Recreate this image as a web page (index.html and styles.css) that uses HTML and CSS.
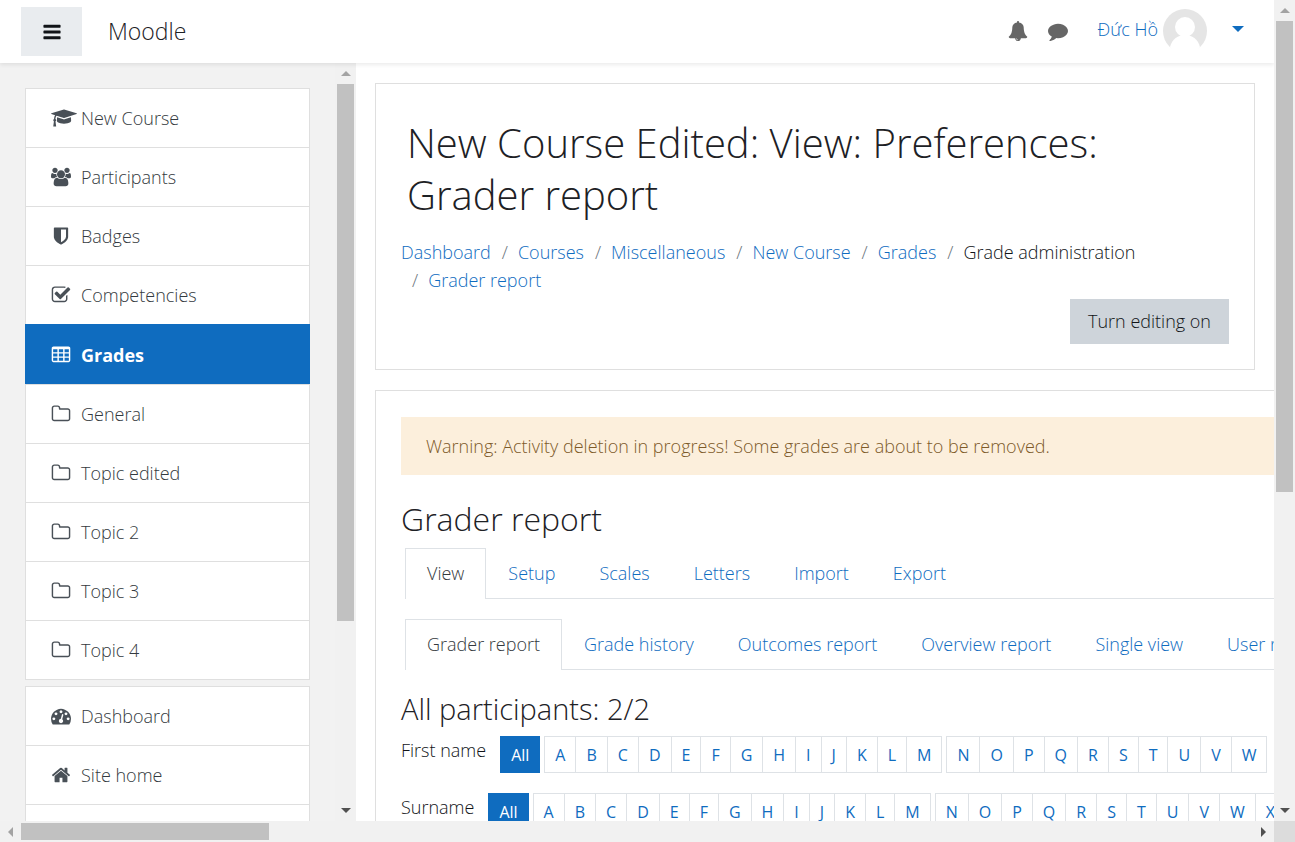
FILE: index.html
```html
<!DOCTYPE html>
<html lang="en">
<head>
<meta charset="utf-8">
<meta name="viewport" content="width=device-width, initial-scale=1">
<title>New Course Edited: View: Preferences: Grader report</title>
<link rel="stylesheet" href="styles.css">
</head>
<body>
<svg class="sprite" aria-hidden="true">
  <symbol id="i-folder" viewBox="0 0 1792 1792"><path d="M1600 1312v-704q0-40-28-68t-68-28h-704q-40 0-68-28t-28-68v-64q0-40-28-68t-68-28h-320q-40 0-68 28t-28 68v960q0 40 28 68t68 28h1216q40 0 68-28t28-68zm128-704v704q0 92-66 158t-158 66h-1216q-92 0-158-66t-66-158v-960q0-92 66-158t158-66h320q92 0 158 66t66 158v32h672q92 0 158 66t66 158z"/></symbol>
</svg>
<div class="window">
  <div class="page">
    <header class="navbar">
      <button class="drawer-toggle" type="button" aria-label="Side panel">
        <svg class="icon" viewBox="0 0 1536 1792"><path d="M1536 1344v128q0 26-19 45t-45 19h-1408q-26 0-45-19t-19-45v-128q0-26 19-45t45-19h1408q26 0 45 19t19 45zm0-512v128q0 26-19 45t-45 19h-1408q-26 0-45-19t-19-45v-128q0-26 19-45t45-19h1408q26 0 45 19t19 45zm0-512v128q0 26-19 45t-45 19h-1408q-26 0-45-19t-19-45v-128q0-26 19-45t45-19h1408q26 0 45 19t19 45z"/></svg>
      </button>
      <a class="brand" href="#">Moodle</a>
      <button class="nav-icon" type="button" aria-label="Notifications">
        <svg class="icon" viewBox="0 0 1792 1792"><path d="M912 1696q0-16-16-16-59 0-101.5-42.5t-42.5-101.5q0-16-16-16t-16 16q0 73 51.5 124.5t124.5 51.5q16 0 16-16zm816-288q0 52-38 90t-90 38h-448q0 106-75 181t-181 75-181-75-75-181h-448q-52 0-90-38t-38-90q50-42 91-88t85-119.5 74.5-158.5 50-206 19.5-260q0-152 117-282.5t307-158.5q-8-19-8-39 0-40 28-68t68-28 68 28 28 68q0 20-8 39 190 28 307 158.5t117 282.5q0 139 19.5 260t50 206 74.5 158.5 85 119.5 91 88z"/></svg>
      </button>
      <button class="nav-icon" type="button" aria-label="Messages">
        <svg class="icon" viewBox="0 0 1792 1792"><path d="M1792 896q0 174-120 321.5t-326 233-450 85.5q-70 0-145-8-198 175-460 242-49 14-114 22-17 2-30.5-9t-17.5-29v-1q-3-4-.5-12t2-10 4.5-9.5l6-9 7-8.5 8-9q7-8 31-34.5t34.5-38 31-39.5 32.5-51 27-59 26-76q-157-89-247.5-220t-90.5-281q0-130 71-248.5t191-204.5 286-136.5 348-50.5q244 0 450 85.5t326 233 120 321.5z"/></svg>
      </button>
      <a class="user" href="#">
        <span class="user-name">Đức Hồ</span>
        <svg class="avatar" viewBox="0 0 44 44"><circle cx="22" cy="22" r="22" fill="#e5e5e5"/><circle cx="22" cy="18" r="10" fill="#fff"/><path d="M7 38C9 30 15 26 22 26s13 4 15 12c-1 3-9 7-15 7s-14-4-15-7z" fill="#fff"/></svg>
        <span class="caret"></span>
      </a>
    </header>
    <div class="body">
      <aside class="drawer">
        <div class="drawer-content">
          <nav class="list" aria-label="Course">
            <a class="item" href="#"><span class="glyph glyph-wide"><svg class="icon" viewBox="0 0 2304 1792"><path d="M1774 836l18 316q4 69-82 128t-235 93.500-323 34.500-323-34.500-235-93.500-82-128l18-316 574 181q22 7 48 7t48-7zm530-324q0 23-22 31l-1120 352q-4 1-10 1t-10-1l-652-206q-43 34-71 111.500t-34 178.500q63 36 63 109 0 69-58 107l58 433q2 14-8 25-9 11-24 11h-192q-15 0-24-11-10-11-8-25l58-433q-58-38-58-107 0-73 65-111 11-207 98-330l-333-104q-22-8-22-31t22-31l1120-352q4-1 10-1t10 1l1120 352q22 8 22 31z"/></svg></span>New Course</a>
            <a class="item" href="#"><span class="glyph"><svg class="icon" viewBox="0 0 1920 1792"><path d="M593 896q-162 5-265 128h-134q-82 0-138-40.500t-56-118.500q0-353 124-353 6 0 43.500 21t97.500 42.500 119 21.500q67 0 133-23-5 37-5 66 0 139 81 256zm1071 637q0 120-73 189.500t-194 69.500h-874q-121 0-194-69.500t-73-189.500q0-53 3.500-103.500t14-109 26.500-108.500 43-97.500 62-81 85.500-53.500 111.500-20q10 0 43 21.500t73 48 107 48 135 21.500 135-21.500 107-48 73-48 43-21.500q61 0 111.500 20t85.500 53.500 62 81 43 97.500 26.500 108.500 14 109 3.500 103.500zm-1024-1277q0 106-75 181t-181 75-181-75-75-181 75-181 181-75 181 75 75 181zm704 384q0 159-112.500 271.500t-271.500 112.500-271.500-112.500-112.500-271.500 112.500-271.500 271.500-112.500 271.500 112.500 112.500 271.500zm576 225q0 78-56 118.500t-138 40.500h-134q-103-123-265-128 81-117 81-256 0-29-5-66 66 23 133 23 59 0 119-21.500t97.500-42.500 43.500-21q124 0 124 353zm-128-609q0 106-75 181t-181 75-181-75-75-181 75-181 181-75 181 75 75 181z"/></svg></span>Participants</a>
            <a class="item" href="#"><span class="glyph"><svg class="icon" viewBox="0 0 1792 1792"><path d="M1344 960v-640h-448v1137q119-63 213-137 235-184 235-360zm192-768v768q0 86-33.500 170.500t-83 150-118 127.500-126.500 103-121 77.500-89.500 49.500-42.500 20q-12 6-26 6t-26-6q-16-7-42.500-20t-89.500-49.500-121-77.500-126.500-103-118-127.500-83-150-33.500-170.500v-768q0-26 19-45t45-19h1152q26 0 45 19t19 45z"/></svg></span>Badges</a>
            <a class="item" href="#"><span class="glyph"><svg class="icon" viewBox="0 0 1792 1792"><path d="M1472 930v318q0 119-84.500 203.500t-203.500 84.500h-832q-119 0-203.500-84.500t-84.500-203.500v-832q0-119 84.500-203.500t203.500-84.500h832q63 0 117 25 15 7 18 23 3 17-9 29l-49 49q-10 10-23 10-3 0-9-2-23-6-45-6h-832q-66 0-113 47t-47 113v832q0 66 47 113t113 47h832q66 0 113-47t47-113v-254q0-13 9-22l64-64q10-10 23-10 6 0 12 3 20 8 20 29zm231-489l-814 814q-24 24-57 24t-57-24l-430-430q-24-24-24-57t24-57l110-110q24-24 57-24t57 24l263 263 647-647q24-24 57-24t57 24l110 110q24 24 24 57t-24 57z"/></svg></span>Competencies</a>
            <a class="item item-active" href="#" aria-current="page"><span class="glyph"><svg class="icon" viewBox="0 0 1792 1792"><path fill-rule="evenodd" d="M224 128h1344q66 0 113 47t47 113v1088q0 66-47 113t-113 47h-1344q-66 0-113-47t-47-113v-1088q0-66 47-113t113-47zM192 384v256h384v-256zM704 384v256h384v-256zM1216 384v256h384v-256zM192 768v256h384v-256zM704 768v256h384v-256zM1216 768v256h384v-256zM192 1152v256h384v-256zM704 1152v256h384v-256zM1216 1152v256h384v-256z"/></svg></span>Grades</a>
            <a class="item" href="#"><span class="glyph"><svg class="icon"><use href="#i-folder"/></svg></span>General</a>
            <a class="item" href="#"><span class="glyph"><svg class="icon"><use href="#i-folder"/></svg></span>Topic edited</a>
            <a class="item" href="#"><span class="glyph"><svg class="icon"><use href="#i-folder"/></svg></span>Topic 2</a>
            <a class="item" href="#"><span class="glyph"><svg class="icon"><use href="#i-folder"/></svg></span>Topic 3</a>
            <a class="item" href="#"><span class="glyph"><svg class="icon"><use href="#i-folder"/></svg></span>Topic 4</a>
          </nav>
          <nav class="list" aria-label="Site">
            <a class="item" href="#"><span class="glyph"><svg class="icon" viewBox="0 0 1792 1792"><path d="M384 1152q0-53-37.500-90.500t-90.500-37.500-90.500 37.500-37.500 90.500 37.500 90.500 90.500 37.500 90.500-37.500 37.500-90.500zm192-448q0-53-37.500-90.500t-90.500-37.500-90.500 37.500-37.500 90.500 37.500 90.500 90.500 37.500 90.500-37.500 37.500-90.500zm428 481l101-382q6-26-7.500-48.500t-38.500-29.500-48 6.500-30 39.500l-101 382q-60 5-107 43.500t-63 98.500q-20 77 20 146t117 89 146-20 89-117q16-60-6-117t-72-91zm660-33q0-53-37.500-90.500t-90.500-37.500-90.500 37.500-37.500 90.500 37.500 90.500 90.500 37.500 90.500-37.500 37.500-90.500zm-640-640q0-53-37.500-90.500t-90.500-37.500-90.500 37.500-37.500 90.500 37.500 90.500 90.500 37.500 90.500-37.500 37.500-90.500zm448 192q0-53-37.500-90.500t-90.500-37.500-90.500 37.500-37.500 90.500 37.500 90.500 90.500 37.500 90.500-37.500 37.500-90.500zm320 448q0 261-141 483-19 29-54 29h-1402q-35 0-54-29-141-221-141-483 0-182 71-348t191-286 286-191 348-71 348 71 286 191 191 286 71 348z"/></svg></span>Dashboard</a>
            <a class="item" href="#"><span class="glyph"><svg class="icon" viewBox="0 0 1792 1792"><path d="M1472 992v480q0 26-19 45t-45 19h-384v-384h-256v384h-384q-26 0-45-19t-19-45v-480q0-1 .5-3t.5-3l575-474 575 474q1 2 1 6zm223-69l-62 74q-8 9-21 11h-3q-13 0-21-7l-692-577-692 577q-12 8-24 7-13-2-21-11l-62-74q-8-10-7-23.500t11-21.500l719-599q32-26 76-26t76 26l244 204v-195q0-14 9-23t23-9h192q14 0 23 9t9 23v408l219 182q10 8 11 21.500t-7 23.500z"/></svg></span>Site home</a>
            <a class="item" href="#" aria-label="More"></a>
          </nav>
        </div>
        <div class="bar bar-y" aria-hidden="true"><span class="arrow arrow-up"></span><div class="track"><div class="thumb" style="height:75%"></div></div><span class="arrow arrow-down"></span></div>
      </aside>
      <main class="main">
        <section class="card">
          <h1>New Course Edited: View: Preferences: Grader report</h1>
          <ol class="breadcrumb">
            <li><a href="#">Dashboard</a></li>
            <li><a href="#">Courses</a></li>
            <li><a href="#">Miscellaneous</a></li>
            <li><a href="#">New Course</a></li>
            <li><a href="#">Grades</a></li>
            <li>Grade administration</li>
            <li><a href="#">Grader report</a></li>
          </ol>
          <div class="actions"><button class="btn" type="button">Turn editing on</button></div>
        </section>
        <section class="card card-wide">
          <div class="alert" role="alert">Warning: Activity deletion in progress! Some grades are about to be removed.</div>
          <h2>Grader report</h2>
          <nav class="tabs" aria-label="Gradebook">
            <a class="tab tab-active" href="#">View</a><a class="tab" href="#">Setup</a><a class="tab" href="#">Scales</a><a class="tab" href="#">Letters</a><a class="tab" href="#">Import</a><a class="tab" href="#">Export</a>
          </nav>
          <nav class="tabs" aria-label="Reports">
            <a class="tab tab-active" href="#">Grader report</a><a class="tab" href="#">Grade history</a><a class="tab" href="#">Outcomes report</a><a class="tab" href="#">Overview report</a><a class="tab" href="#">Single view</a><a class="tab" href="#">User report</a>
          </nav>
          <h3>All participants: 2/2</h3>
          <div class="initials">
            <span class="initials-label">First name</span>
            <a class="all" href="#">All</a>
            <div class="letters"><a href="#">A</a><a href="#">B</a><a href="#">C</a><a href="#">D</a><a href="#">E</a><a href="#">F</a><a href="#">G</a><a href="#">H</a><a href="#">I</a><a href="#">J</a><a href="#">K</a><a href="#">L</a><a href="#">M</a></div>
            <div class="letters"><a href="#">N</a><a href="#">O</a><a href="#">P</a><a href="#">Q</a><a href="#">R</a><a href="#">S</a><a href="#">T</a><a href="#">U</a><a href="#">V</a><a href="#">W</a></div>
          </div>
          <div class="initials">
            <span class="initials-label">Surname</span>
            <a class="all" href="#">All</a>
            <div class="letters"><a href="#">A</a><a href="#">B</a><a href="#">C</a><a href="#">D</a><a href="#">E</a><a href="#">F</a><a href="#">G</a><a href="#">H</a><a href="#">I</a><a href="#">J</a><a href="#">K</a><a href="#">L</a><a href="#">M</a></div>
            <div class="letters"><a href="#">N</a><a href="#">O</a><a href="#">P</a><a href="#">Q</a><a href="#">R</a><a href="#">S</a><a href="#">T</a><a href="#">U</a><a href="#">V</a><a href="#">W</a><a href="#">X</a></div>
          </div>
        </section>
      </main>
    </div>
  </div>
  <div class="bar bar-y" aria-hidden="true"><span class="arrow arrow-up"></span><div class="track"><div class="thumb" style="height:60.5%"></div></div><span class="arrow arrow-down"></span></div>
  <div class="bar bar-x" aria-hidden="true"><span class="arrow arrow-left"></span><div class="track"><div class="thumb" style="width:20.1%"></div></div><span class="arrow arrow-right"></span></div>
  <div class="corner"></div>
</div>
</body>
</html>
```
FILE: styles.css
```css
* { box-sizing: border-box; }

body {
  margin: 0;
  font-family: "Open Sans", "Noto Sans", sans-serif;
  font-size: 18px;
  line-height: 28px;
  font-weight: 300;
  color: #111418;
  background: #fff;
}

a { color: #0f6cbf; text-decoration: none; }
button { font: inherit; color: inherit; border: 0; cursor: pointer; }

.sprite { display: none; }
.icon { height: 20px; width: 20px; flex: none; fill: currentColor; overflow: visible; }

/* Window frame with its scroll bars */
.window {
  display: grid;
  grid-template-columns: minmax(0, 1fr) 21px;
  grid-template-rows: minmax(0, 1fr) 21px;
  height: 100vh;
}
.page { display: flex; flex-direction: column; min-width: 0; min-height: 0; overflow: hidden; }
.bar { display: flex; background: #f1f1f1; }
.bar-y { flex-direction: column; width: 21px; padding: 0 2px; }
.bar-x { padding: 2px 0; }
.track { flex: 1; }
.thumb { width: 100%; height: 100%; background: #c1c1c1; }
.arrow { display: grid; place-items: center; width: 17px; height: 21px; }
.bar-x .arrow { width: 21px; height: 17px; }
.arrow::before { content: ""; border: 5px solid transparent; }
.arrow-up::before { border-top: 0; border-bottom-color: #a3a3a3; }
.arrow-down::before { border-bottom: 0; border-top-color: #505050; }
.arrow-left::before { border-left: 0; border-right-color: #a3a3a3; }
.arrow-right::before { border-right: 0; border-left-color: #505050; }
.corner { background: #dcdcdc; }

/* Top bar */
.navbar {
  display: flex;
  align-items: center;
  flex: none;
  height: 63px;
  padding: 0 30px 0 21px;
  background: #fff;
  box-shadow: 0 2px 4px rgba(0, 0, 0, .08);
  z-index: 1;
}
.drawer-toggle { display: grid; place-items: center; width: 61px; height: 49px; padding: 0; background: #e9ecef; }
.brand { margin: 0 auto 0 26px; padding-bottom: 2px; font-size: 23px; color: #1d2125; }
.nav-icon { display: grid; place-items: center; width: 40px; height: 40px; padding: 0 0 2px; background: none; color: #666; }
.user { display: flex; align-items: center; gap: 5px; margin-left: 20px; padding-bottom: 2px; }
.user-name { padding-bottom: 3px; }
.avatar { width: 44px; height: 44px; }
.caret { margin: 0 0 4px 20px; border: 6px solid transparent; border-top-color: #0f6cbf; border-bottom: 0; }

.body { display: flex; flex: 1; min-height: 0; }

/* Side drawer */
.drawer { display: flex; flex: none; width: 356px; background: #f2f2f2; }
.drawer-content { flex: 1; min-width: 0; padding: 25px; overflow: hidden; }
.list { border: 1px solid #dfdfdf; background: #fff; }
.list + .list { margin-top: 6px; }
.item { display: flex; align-items: center; height: 59px; padding: 0 25px; border-top: 1px solid #dfdfdf; color: #343a40; }
.item:first-child { height: 58px; border-top: 0; }
.item-active { height: 60px; margin: 0 -1px; padding: 0 26px; border-color: #0f6cbf; background: #0f6cbf; color: #fff; font-weight: 700; }
.item .icon { fill: #495057; }
.item-active .icon { fill: #fff; }
.glyph { display: flex; justify-content: center; width: 20px; margin-right: 10px; }
.glyph-wide { justify-content: flex-start; }
.glyph-wide .icon { width: 26px; }

/* Content */
.main { flex: 1; min-width: 0; padding: 20px 19px; overflow: hidden; }
.card { padding: 33px 25px 25px; border: 1px solid #dfdfdf; background: #fff; }
.card-wide { width: max-content; min-width: 1200px; margin-top: 20px; padding: 26px 25px; }
h1, h2, h3 { margin: 0; font-weight: 300; color: #1d2125; }
h1 { padding: 0 6px; font-size: 40px; line-height: 52px; }
h2 { margin: 24px 0 9px; font-size: 32px; line-height: 40px; }
h3 { margin: 21px 0 9px; font-size: 29px; line-height: 36px; }

.breadcrumb { display: flex; flex-wrap: wrap; margin: 17px 0 5px; padding: 0; list-style: none; }
.breadcrumb li + li { padding-left: 11px; }
.breadcrumb li + li::before { content: "/"; padding-right: 10px; color: #6a737b; }
.actions { display: flex; justify-content: flex-end; }
.btn { height: 45px; padding: 0 18px 2px; background: #ced4da; }

.alert { padding: 15px 25px; background: #fcefdc; color: #7d5a29; }

.tabs { display: flex; margin: 0 4px; border-bottom: 1px solid #dee2e6; }
.tabs + .tabs { margin-top: 20px; }
.tab { height: 50px; padding: 10px 21px; border: 1px solid transparent; border-bottom: 0; }
.tab-active { height: 51px; margin-bottom: -1px; border-color: #dee2e6; background: #fff; color: #343a40; }

.initials { display: flex; align-items: flex-start; margin-bottom: 20px; }
.initials-label { margin-right: 14px; }
.all { height: 37px; padding: 5px 11px; font-size: 16px; font-weight: 400; background: #0f6cbf; color: #fff; }
.letters { display: flex; margin-left: 4px; border: 1px solid #dee2e6; border-left: 0; font-size: 16px; font-weight: 400; }
.letters a { height: 35px; padding: 4px 10px; border-left: 1px solid #dee2e6; }
```
